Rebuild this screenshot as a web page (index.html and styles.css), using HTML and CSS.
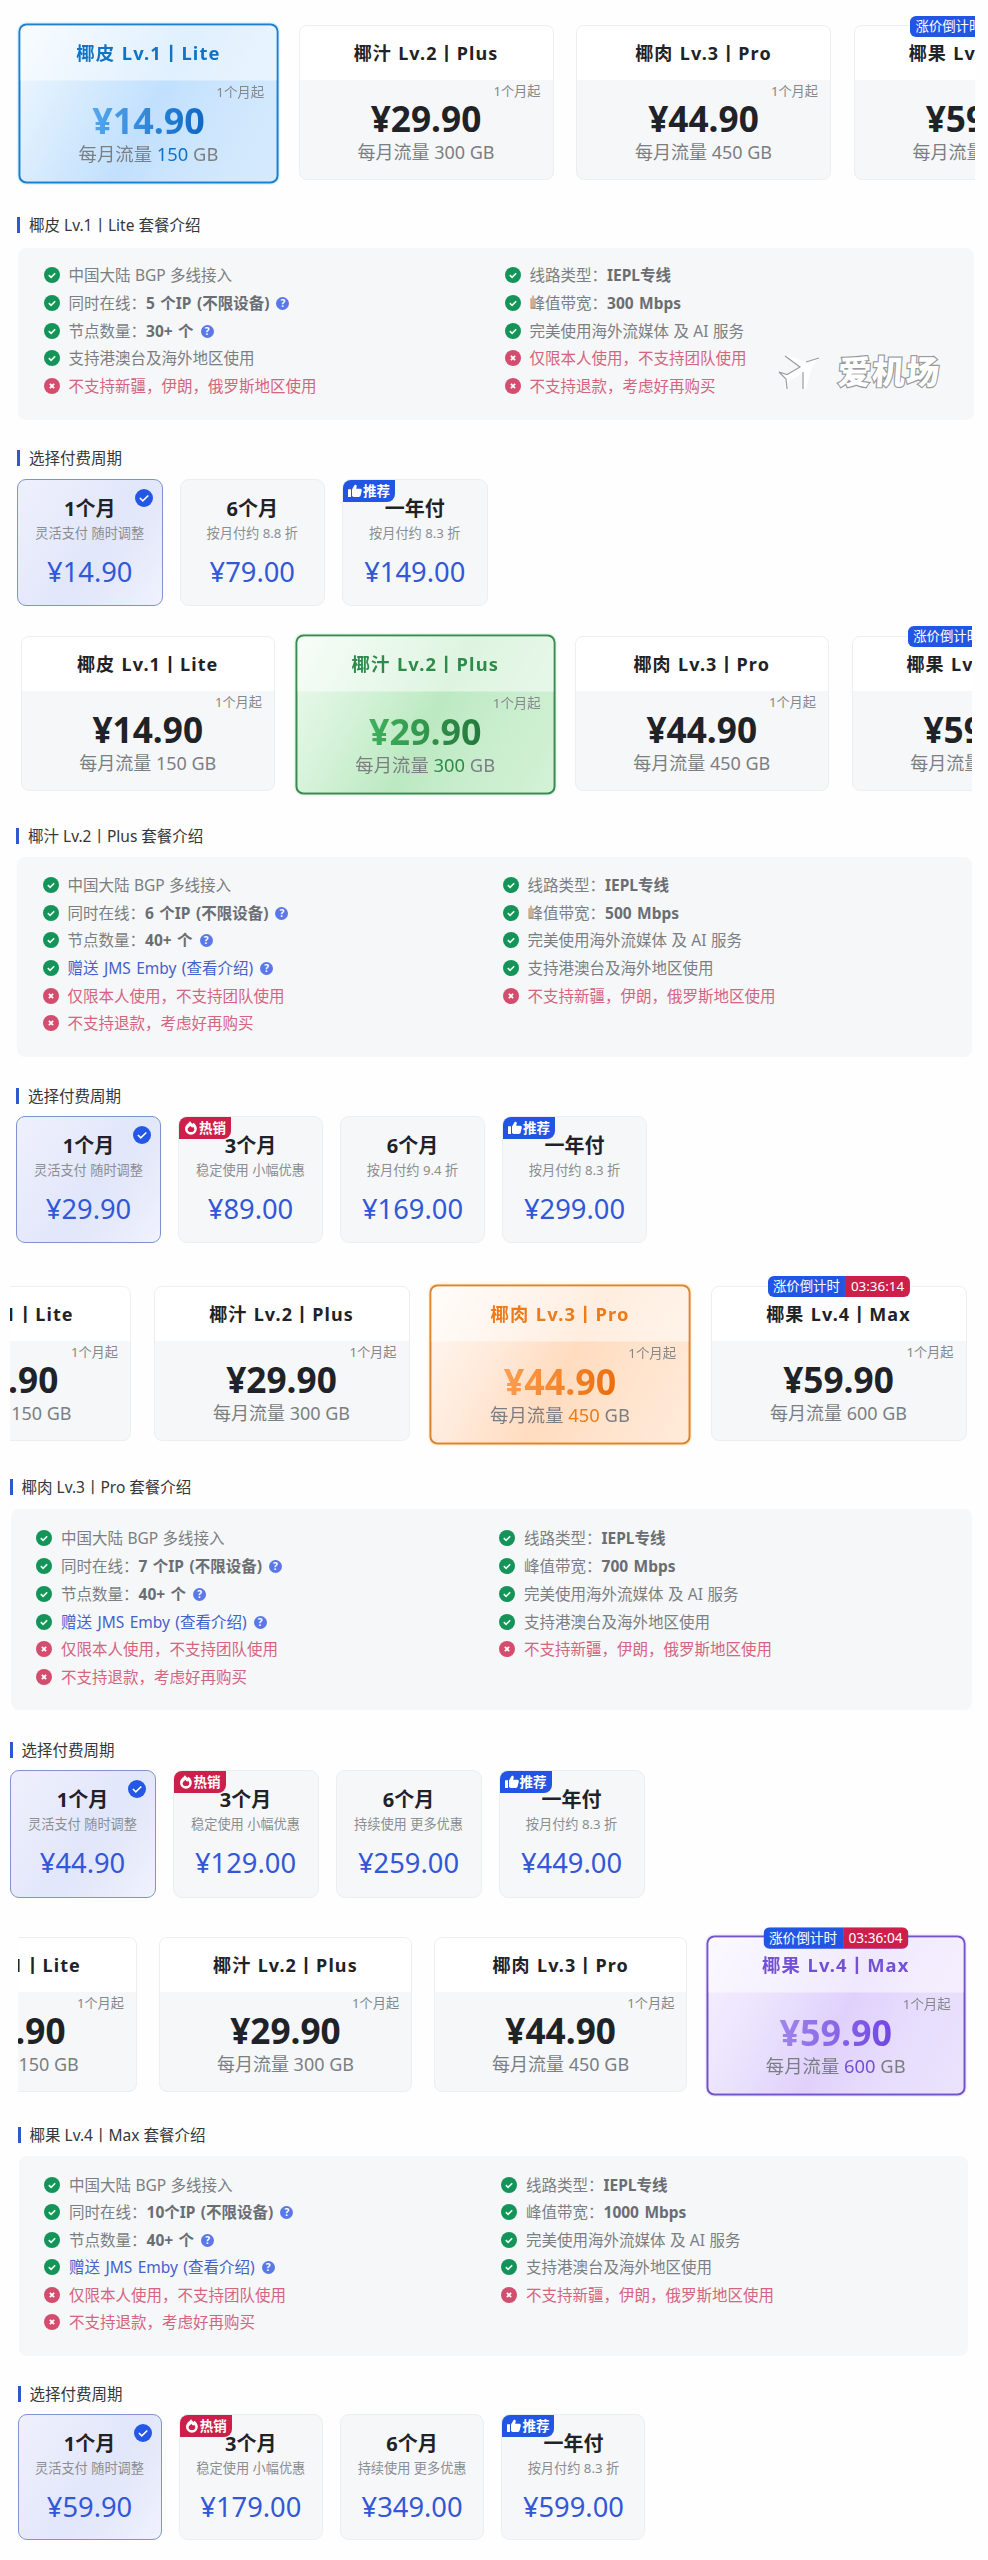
FILE: index.html
```html
<!DOCTYPE html>
<html lang="zh-CN">
<head>
    <meta charset="UTF-8">
    <meta name="viewport" content="width=device-width, initial-scale=1.0">
    <title>套餐介绍</title>
    <link rel="stylesheet" href="styles.css">
</head>
<body>
    <!-- shared icons -->
    <svg class="sprite" width="0" height="0">
        <symbol id="ok" viewBox="0 0 16 16">
            <circle cx="8" cy="8" r="8" fill="#15945a"/>
            <path d="M4.8 8.1l2.3 2.2 4.1-4" fill="none" stroke="#e9fff4" stroke-width="1.6"/>
        </symbol>
        <symbol id="no" viewBox="0 0 16 16">
            <circle cx="8" cy="8" r="8" fill="#d34d6e"/>
            <path d="M5.9 5.9l4.2 4.2M10.1 5.9l-4.2 4.2" stroke="#fff" stroke-width="1.8"/>
        </symbol>
        <symbol id="picked" viewBox="0 0 18 18">
            <circle cx="9" cy="9" r="9" fill="#2457e6"/>
            <path d="M4.9 9l2.9 2.9 5.5-5.4" fill="none" stroke="#fff" stroke-width="1.6"/>
        </symbol>
        <symbol id="thumb" viewBox="0 0 14 14">
            <path d="M0 5.2h3V13H0zM4 5.4L6.6 1C8 .2 9 1.300 8.700 2.600L8.200 4.800H12.500C13.700 5 14 6 13.700 7L12.600 11.600C12.300 12.600 11.700 13 10.800 13H5.500L4 12z" fill="#fff"/>
        </symbol>
        <symbol id="fire" viewBox="0 0 14 14">
            <path d="M6 0c.4 1.300 1.600 1.900 2.500 2.900l1-1.200c2 1.500 3.300 3.600 3.300 6A5.900 5.900 0 0 1 1 7.900C1 5.600 2.200 4 3.500 2.800 4.500 1.900 5.700 1.200 6 0z" fill="#fff"/>
            <path d="M6.300 4.700c.6 1.300 1.400 1.300 1.900 2l.9-.9c.9 1 1.200 1.900 1.200 2.600a3.400 3.200 0 0 1-6.700 0c0-1.700 1.800-2.200 2.700-3.700z" fill="#cc1f4a"/>
        </symbol>
    </svg>

    <!-- Lv.1 Lite -->
    <section class="plan lite">
        <div class="cards">
            <div class="card active">
                <h3>椰皮 Lv.1丨Lite</h3>
                <div class="info"><small>1个月起</small><strong>¥14.90</strong><p>每月流量 <em>150</em> GB</p></div>
            </div>
            <div class="card">
                <h3>椰汁 Lv.2丨Plus</h3>
                <div class="info"><small>1个月起</small><strong>¥29.90</strong><p>每月流量 <em>300</em> GB</p></div>
            </div>
            <div class="card">
                <h3>椰肉 Lv.3丨Pro</h3>
                <div class="info"><small>1个月起</small><strong>¥44.90</strong><p>每月流量 <em>450</em> GB</p></div>
            </div>
            <div class="card">
                <div class="countdown"><span>涨价倒计时</span><span>03:36:14</span></div>
                <h3>椰果 Lv.4丨Max</h3>
                <div class="info"><small>1个月起</small><strong>¥59.90</strong><p>每月流量 <em>600</em> GB</p></div>
            </div>
        </div>
        <h4 class="intro">椰皮 Lv.1丨Lite 套餐介绍</h4>
        <div class="panel">
            <ul>
                <li><svg><use href="#ok"/></svg><span>中国大陆 BGP 多线接入</span></li>
                <li><svg><use href="#ok"/></svg><span>同时在线：<b>5 个IP (不限设备)</b></span><i>?</i></li>
                <li><svg><use href="#ok"/></svg><span>节点数量：<b>30+ 个</b></span><i>?</i></li>
                <li><svg><use href="#ok"/></svg><span>支持港澳台及海外地区使用</span></li>
                <li class="no"><svg><use href="#no"/></svg><span>不支持新疆，伊朗，俄罗斯地区使用</span></li>
            </ul>
            <ul>
                <li><svg><use href="#ok"/></svg><span>线路类型：<b>IEPL专线</b></span></li>
                <li><svg><use href="#ok"/></svg><span>峰值带宽：<b>300 Mbps</b></span></li>
                <li><svg><use href="#ok"/></svg><span>完美使用海外流媒体 及 AI 服务</span></li>
                <li class="no"><svg><use href="#no"/></svg><span>仅限本人使用，不支持团队使用</span></li>
                <li class="no"><svg><use href="#no"/></svg><span>不支持退款，考虑好再购买</span></li>
            </ul>
            <div class="watermark">
                <svg width="44" height="38" viewBox="0 0 44 38">
                    <path d="M1 17L8 19 21 12 7 1 11 1 30 8 41 3 34 12 28 34 25 34 25 18 10 27 8 34 7 34 7 24z" fill="#fff"/>
                    <path d="M7 1L22 12 9 19.500 1 17M1 17L8 24 9 34M25 17V34M28 7L41 3" fill="none" stroke="#9b9da0" stroke-width="1.200"/>
                </svg>
                <span>爱机场</span>
            </div>
        </div>
        <h4 class="cycle">选择付费周期</h4>
        <div class="options">
            <div class="option active"><svg class="picked"><use href="#picked"/></svg><h5>1个月</h5><p>灵活支付 随时调整</p><strong>¥14.90</strong></div>
            <div class="option"><h5>6个月</h5><p>按月付约 8.8 折</p><strong>¥79.00</strong></div>
            <div class="option"><div class="tag"><svg><use href="#thumb"/></svg>推荐</div><h5>一年付</h5><p>按月付约 8.3 折</p><strong>¥149.00</strong></div>
        </div>
    </section>

    <!-- Lv.2 Plus -->
    <section class="plan plus">
        <div class="cards">
            <div class="card">
                <h3>椰皮 Lv.1丨Lite</h3>
                <div class="info"><small>1个月起</small><strong>¥14.90</strong><p>每月流量 <em>150</em> GB</p></div>
            </div>
            <div class="card active">
                <h3>椰汁 Lv.2丨Plus</h3>
                <div class="info"><small>1个月起</small><strong>¥29.90</strong><p>每月流量 <em>300</em> GB</p></div>
            </div>
            <div class="card">
                <h3>椰肉 Lv.3丨Pro</h3>
                <div class="info"><small>1个月起</small><strong>¥44.90</strong><p>每月流量 <em>450</em> GB</p></div>
            </div>
            <div class="card">
                <div class="countdown"><span>涨价倒计时</span><span>03:36:14</span></div>
                <h3>椰果 Lv.4丨Max</h3>
                <div class="info"><small>1个月起</small><strong>¥59.90</strong><p>每月流量 <em>600</em> GB</p></div>
            </div>
        </div>
        <h4 class="intro">椰汁 Lv.2丨Plus 套餐介绍</h4>
        <div class="panel">
            <ul>
                <li><svg><use href="#ok"/></svg><span>中国大陆 BGP 多线接入</span></li>
                <li><svg><use href="#ok"/></svg><span>同时在线：<b>6 个IP (不限设备)</b></span><i>?</i></li>
                <li><svg><use href="#ok"/></svg><span>节点数量：<b>40+ 个</b></span><i>?</i></li>
                <li class="link"><svg><use href="#ok"/></svg><span>赠送 JMS Emby (查看介绍)</span><i>?</i></li>
                <li class="no"><svg><use href="#no"/></svg><span>仅限本人使用，不支持团队使用</span></li>
                <li class="no"><svg><use href="#no"/></svg><span>不支持退款，考虑好再购买</span></li>
            </ul>
            <ul>
                <li><svg><use href="#ok"/></svg><span>线路类型：<b>IEPL专线</b></span></li>
                <li><svg><use href="#ok"/></svg><span>峰值带宽：<b>500 Mbps</b></span></li>
                <li><svg><use href="#ok"/></svg><span>完美使用海外流媒体 及 AI 服务</span></li>
                <li><svg><use href="#ok"/></svg><span>支持港澳台及海外地区使用</span></li>
                <li class="no"><svg><use href="#no"/></svg><span>不支持新疆，伊朗，俄罗斯地区使用</span></li>
            </ul>
        </div>
        <h4 class="cycle">选择付费周期</h4>
        <div class="options">
            <div class="option active"><svg class="picked"><use href="#picked"/></svg><h5>1个月</h5><p>灵活支付 随时调整</p><strong>¥29.90</strong></div>
            <div class="option"><div class="tag hot"><svg><use href="#fire"/></svg>热销</div><h5>3个月</h5><p>稳定使用 小幅优惠</p><strong>¥89.00</strong></div>
            <div class="option"><h5>6个月</h5><p>按月付约 9.4 折</p><strong>¥169.00</strong></div>
            <div class="option"><div class="tag"><svg><use href="#thumb"/></svg>推荐</div><h5>一年付</h5><p>按月付约 8.3 折</p><strong>¥299.00</strong></div>
        </div>
    </section>

    <!-- Lv.3 Pro -->
    <section class="plan pro">
        <div class="cards">
            <div class="card">
                <h3>椰皮 Lv.1丨Lite</h3>
                <div class="info"><small>1个月起</small><strong>¥14.90</strong><p>每月流量 <em>150</em> GB</p></div>
            </div>
            <div class="card">
                <h3>椰汁 Lv.2丨Plus</h3>
                <div class="info"><small>1个月起</small><strong>¥29.90</strong><p>每月流量 <em>300</em> GB</p></div>
            </div>
            <div class="card active">
                <h3>椰肉 Lv.3丨Pro</h3>
                <div class="info"><small>1个月起</small><strong>¥44.90</strong><p>每月流量 <em>450</em> GB</p></div>
            </div>
            <div class="card">
                <div class="countdown"><span>涨价倒计时</span><span>03:36:14</span></div>
                <h3>椰果 Lv.4丨Max</h3>
                <div class="info"><small>1个月起</small><strong>¥59.90</strong><p>每月流量 <em>600</em> GB</p></div>
            </div>
        </div>
        <h4 class="intro">椰肉 Lv.3丨Pro 套餐介绍</h4>
        <div class="panel">
            <ul>
                <li><svg><use href="#ok"/></svg><span>中国大陆 BGP 多线接入</span></li>
                <li><svg><use href="#ok"/></svg><span>同时在线：<b>7 个IP (不限设备)</b></span><i>?</i></li>
                <li><svg><use href="#ok"/></svg><span>节点数量：<b>40+ 个</b></span><i>?</i></li>
                <li class="link"><svg><use href="#ok"/></svg><span>赠送 JMS Emby (查看介绍)</span><i>?</i></li>
                <li class="no"><svg><use href="#no"/></svg><span>仅限本人使用，不支持团队使用</span></li>
                <li class="no"><svg><use href="#no"/></svg><span>不支持退款，考虑好再购买</span></li>
            </ul>
            <ul>
                <li><svg><use href="#ok"/></svg><span>线路类型：<b>IEPL专线</b></span></li>
                <li><svg><use href="#ok"/></svg><span>峰值带宽：<b>700 Mbps</b></span></li>
                <li><svg><use href="#ok"/></svg><span>完美使用海外流媒体 及 AI 服务</span></li>
                <li><svg><use href="#ok"/></svg><span>支持港澳台及海外地区使用</span></li>
                <li class="no"><svg><use href="#no"/></svg><span>不支持新疆，伊朗，俄罗斯地区使用</span></li>
            </ul>
        </div>
        <h4 class="cycle">选择付费周期</h4>
        <div class="options">
            <div class="option active"><svg class="picked"><use href="#picked"/></svg><h5>1个月</h5><p>灵活支付 随时调整</p><strong>¥44.90</strong></div>
            <div class="option"><div class="tag hot"><svg><use href="#fire"/></svg>热销</div><h5>3个月</h5><p>稳定使用 小幅优惠</p><strong>¥129.00</strong></div>
            <div class="option"><h5>6个月</h5><p>持续使用 更多优惠</p><strong>¥259.00</strong></div>
            <div class="option"><div class="tag"><svg><use href="#thumb"/></svg>推荐</div><h5>一年付</h5><p>按月付约 8.3 折</p><strong>¥449.00</strong></div>
        </div>
    </section>

    <!-- Lv.4 Max -->
    <section class="plan max">
        <div class="cards">
            <div class="card">
                <h3>椰皮 Lv.1丨Lite</h3>
                <div class="info"><small>1个月起</small><strong>¥14.90</strong><p>每月流量 <em>150</em> GB</p></div>
            </div>
            <div class="card">
                <h3>椰汁 Lv.2丨Plus</h3>
                <div class="info"><small>1个月起</small><strong>¥29.90</strong><p>每月流量 <em>300</em> GB</p></div>
            </div>
            <div class="card">
                <h3>椰肉 Lv.3丨Pro</h3>
                <div class="info"><small>1个月起</small><strong>¥44.90</strong><p>每月流量 <em>450</em> GB</p></div>
            </div>
            <div class="card active">
                <div class="countdown"><span>涨价倒计时</span><span>03:36:04</span></div>
                <h3>椰果 Lv.4丨Max</h3>
                <div class="info"><small>1个月起</small><strong>¥59.90</strong><p>每月流量 <em>600</em> GB</p></div>
            </div>
        </div>
        <h4 class="intro">椰果 Lv.4丨Max 套餐介绍</h4>
        <div class="panel">
            <ul>
                <li><svg><use href="#ok"/></svg><span>中国大陆 BGP 多线接入</span></li>
                <li><svg><use href="#ok"/></svg><span>同时在线：<b>10个IP (不限设备)</b></span><i>?</i></li>
                <li><svg><use href="#ok"/></svg><span>节点数量：<b>40+ 个</b></span><i>?</i></li>
                <li class="link"><svg><use href="#ok"/></svg><span>赠送 JMS Emby (查看介绍)</span><i>?</i></li>
                <li class="no"><svg><use href="#no"/></svg><span>仅限本人使用，不支持团队使用</span></li>
                <li class="no"><svg><use href="#no"/></svg><span>不支持退款，考虑好再购买</span></li>
            </ul>
            <ul>
                <li><svg><use href="#ok"/></svg><span>线路类型：<b>IEPL专线</b></span></li>
                <li><svg><use href="#ok"/></svg><span>峰值带宽：<b>1000 Mbps</b></span></li>
                <li><svg><use href="#ok"/></svg><span>完美使用海外流媒体 及 AI 服务</span></li>
                <li><svg><use href="#ok"/></svg><span>支持港澳台及海外地区使用</span></li>
                <li class="no"><svg><use href="#no"/></svg><span>不支持新疆，伊朗，俄罗斯地区使用</span></li>
            </ul>
        </div>
        <h4 class="cycle">选择付费周期</h4>
        <div class="options">
            <div class="option active"><svg class="picked"><use href="#picked"/></svg><h5>1个月</h5><p>灵活支付 随时调整</p><strong>¥59.90</strong></div>
            <div class="option"><div class="tag hot"><svg><use href="#fire"/></svg>热销</div><h5>3个月</h5><p>稳定使用 小幅优惠</p><strong>¥179.00</strong></div>
            <div class="option"><h5>6个月</h5><p>持续使用 更多优惠</p><strong>¥349.00</strong></div>
            <div class="option"><div class="tag"><svg><use href="#thumb"/></svg>推荐</div><h5>一年付</h5><p>按月付约 8.3 折</p><strong>¥599.00</strong></div>
        </div>
    </section>
</body>
</html>
```
FILE: styles.css
```css
* {
    box-sizing: border-box;
    margin: 0;
    padding: 0;
}
body {
    font-family: "Noto Sans", "Noto Sans CJK SC", sans-serif;
    color: #1f2327;
    background: #fefefe;
    overflow-x: hidden;
}
.sprite {
    position: absolute;
}
.plan {
    width: 988px;
    display: flex;
    flex-direction: column;
}

/* per-plan sizes and colours */
.lite {
    height: 610.4px;
    padding: 0 13px 0 17px;
    --card: 255px;
    --gap: 22.5px;
    --shift: 4px;
    --intro-top: 17px;
    --panel-top: 15px;
    --panel-height: 172px;
    --panel-right: 1.5px;
    --list-top: 13.5px;
    --column: 461px;
    --row: 27.7px;
    --cycle-top: 30px;
    --option: 145.5px;
    --option-gap: 17px;
    --option-top: 13px;
    --option-height: 127px;
    --main: #0f74c8;
    --edge: #1f7fc9;
    --glow: #a5dcfb;
    --from: #56a9f0;
    --to: #0b66c3;
    --fill: linear-gradient(118deg, #f2f9ff 0%, #d6ebfd 28%, #c1e0fe 52%, #cde6fd 72%, #d6eafd 100%);
}
.plus {
    height: 650.3px;
    padding: 0 16px;
    --card: 254.5px;
    --gap: 22.5px;
    --shift: 4.5px;
    --intro-top: 17.3px;
    --panel-top: 13px;
    --panel-height: 200.3px;
    --panel-right: 0;
    --list-top: 14.5px;
    --column: 460px;
    --row: 27.65px;
    --cycle-top: 30.7px;
    --option: 145px;
    --option-gap: 17px;
    --option-top: 12.3px;
    --option-height: 127px;
    --main: #2e8b4b;
    --edge: #3b8a52;
    --glow: #b5ebc0;
    --from: #3fb35e;
    --to: #23773b;
    --fill: linear-gradient(118deg, #effaf0 0%, #d4f2d8 28%, #bce9c1 52%, #c8edcc 72%, #d2f2d5 100%);
}
.pro {
    height: 651px;
    padding: 0 16px 0 9.5px;
    --card: 256px;
    --gap: 22.5px;
    --shift: -134.5px;
    --intro-top: 18.8px;
    --panel-top: 13.2px;
    --panel-height: 201.3px;
    --panel-right: 0;
    --list-top: 15.6px;
    --column: 463px;
    --row: 27.8px;
    --cycle-top: 32px;
    --option: 146px;
    --option-gap: 17px;
    --option-top: 11.8px;
    --option-height: 128px;
    --main: #ef7a18;
    --edge: #dc842f;
    --glow: #ffd890;
    --from: #fba052;
    --to: #ec6c0a;
    --fill: linear-gradient(118deg, #fff9f3 0%, #ffeadb 28%, #ffdcbf 52%, #ffe3cc 72%, #ffebda 100%);
}
.max {
    height: 648.3px;
    padding: 0 20px 0 17.5px;
    --card: 253.5px;
    --gap: 21.7px;
    --shift: -134px;
    --intro-top: 15.3px;
    --panel-top: 13.3px;
    --panel-height: 200px;
    --panel-right: 0;
    --list-top: 15px;
    --column: 457px;
    --row: 27.4px;
    --cycle-top: 30px;
    --option: 144px;
    --option-gap: 17.3px;
    --option-top: 12px;
    --option-height: 126px;
    --main: #7450d6;
    --edge: #7354c9;
    --glow: #d9ccfb;
    --from: #a287ec;
    --to: #6f45e2;
    --fill: linear-gradient(118deg, #f6f1ff 0%, #ebe3fd 28%, #e0d1fc 52%, #e7dcfd 72%, #ebe3fd 100%);
}

/* plan cards */
.cards {
    display: flex;
    flex: none;
    gap: var(--gap);
    height: 200px;
    padding-top: 25.3px;
    padding-left: 4px;
    margin-left: -4px;
    overflow: hidden;
    align-items: flex-start;
}
.pro .cards,
.max .cards {
    padding-left: 0;
    margin-left: 0;
    margin-right: -2px;
}
.card {
    position: relative;
    flex: none;
    width: var(--card);
    height: 155px;
    border: 1px solid #eceff0;
    border-radius: 8px;
    background: #f5f7f8;
    text-align: center;
}
.card:first-child {
    margin-left: var(--shift);
}
.card h3 {
    height: 54px;
    line-height: 54px;
    font-size: 18px;
    letter-spacing: 1.1px;
    word-spacing: 0.6px;
    background: #fff;
    border-radius: 7px 7px 0 0;
    white-space: nowrap;
}
.info {
    padding-top: 3px;
}
.info small {
    display: block;
    padding-right: 12px;
    text-align: right;
    font-size: 13.2px;
    line-height: 17px;
    color: #85888c;
}
.info strong {
    display: block;
    width: max-content;
    margin: 0 auto;
    font-size: 35.2px;
    line-height: 37px;
}
.info p {
    font-size: 18px;
    line-height: 31px;
    color: #7b7f83;
}
.info em {
    font-style: normal;
}
.card.active {
    height: 157px;
    border: 2px solid var(--edge);
    background: var(--fill);
    box-shadow: 0 0 2px var(--glow);
    transform: scale(1.02);
}
.card.active h3 {
    color: var(--main);
    background: rgba(255, 255, 255, 0.5);
    border-radius: 6px 6px 0 0;
}
.card.active strong {
    color: transparent;
    background: linear-gradient(100deg, var(--from), var(--to));
    -webkit-background-clip: text;
    background-clip: text;
}
.card.active em {
    color: var(--main);
}
.countdown {
    position: absolute;
    top: -10.5px;
    left: 50%;
    transform: translateX(-50%);
    display: flex;
    height: 21px;
    border-radius: 6px;
    overflow: hidden;
    font-size: 13.4px;
    line-height: 20px;
    color: #fff;
    white-space: nowrap;
    z-index: 1;
}
.countdown span {
    padding: 0 5.5px;
    background: #2355e4;
}
.countdown span + span {
    background: #cc1f4a;
}

/* headings with the blue bar */
h4 {
    flex: none;
    height: 16px;
    padding-left: 9px;
    border-left: 3px solid #3157cf;
    font-size: 15.5px;
    line-height: 16px;
    font-weight: normal;
    color: #34373b;
}
.intro {
    margin-top: var(--intro-top);
}
.cycle {
    margin-top: var(--cycle-top);
}

/* feature list */
.panel {
    position: relative;
    flex: none;
    display: grid;
    grid-template-columns: var(--column) 1fr;
    height: var(--panel-height);
    margin: var(--panel-top) var(--panel-right) 0 1px;
    padding: var(--list-top) 0 0 25.5px;
    border-radius: 8px;
    background: #f5f7f8;
}
.panel ul {
    list-style: none;
}
.panel li {
    display: flex;
    align-items: center;
    height: var(--row);
    font-size: 15.5px;
    line-height: 24px;
    word-spacing: 0.4px;
    color: #7b7f83;
    white-space: nowrap;
}
.panel li svg {
    width: 16px;
    height: 16px;
    margin-right: 9px;
}
.panel b {
    color: #6a6e73;
    word-spacing: 1.4px;
}
.panel i {
    width: 13px;
    height: 13px;
    margin: 1px 0 0 7px;
    border-radius: 50%;
    background: #5b78ea;
    color: #fff;
    font-size: 10px;
    font-style: normal;
    font-weight: bold;
    line-height: 13px;
    text-align: center;
}
.panel .no {
    color: #d5647f;
}
.panel .link {
    color: #4561cc;
    word-spacing: 1.4px;
}
.watermark {
    position: absolute;
    left: 760px;
    top: 107px;
    display: flex;
}
.watermark span {
    margin-left: 16px;
    font-size: 33px;
    line-height: 34px;
    font-weight: 900;
    letter-spacing: 1px;
    color: #fff;
    -webkit-text-stroke: 2.4px #999b9e;
    paint-order: stroke fill;
    transform: skewX(-4deg);
}

/* billing cycle */
.options {
    display: flex;
    gap: var(--option-gap);
    margin-top: var(--option-top);
}
.option {
    position: relative;
    flex: none;
    width: var(--option);
    height: var(--option-height);
    padding-top: 14px;
    border: 1px solid #eceff0;
    border-radius: 9px;
    background: #f5f7f8;
    text-align: center;
}
.option.active {
    border-color: #7f93cf;
    background: linear-gradient(125deg, #eef0fc 0%, #e8ebfb 30%, #e1e6fa 55%, #e6eafa 75%, #f0f2fd 100%);
}
.option h5 {
    font-size: 20px;
    line-height: 29px;
}
.option p {
    font-size: 13.2px;
    line-height: 20px;
    color: #8b8e92;
}
.option strong {
    display: block;
    margin-top: 10px;
    font-size: 27.3px;
    font-weight: normal;
    line-height: 38px;
    color: #3258d8;
}
.picked {
    position: absolute;
    top: 9px;
    right: 9px;
    width: 18px;
    height: 18px;
}
.tag {
    position: absolute;
    top: 0;
    left: 0;
    display: flex;
    align-items: center;
    width: 52px;
    height: 22px;
    padding-left: 5px;
    border-radius: 8px 0 8px 0;
    background: #2355e4;
    color: #fff;
    font-size: 13.5px;
    font-weight: bold;
    line-height: 22px;
    white-space: nowrap;
}
.tag svg {
    flex: none;
    width: 14px;
    height: 14px;
    margin-right: 1px;
}
.tag.hot {
    background: #cc1f4a;
}
```
